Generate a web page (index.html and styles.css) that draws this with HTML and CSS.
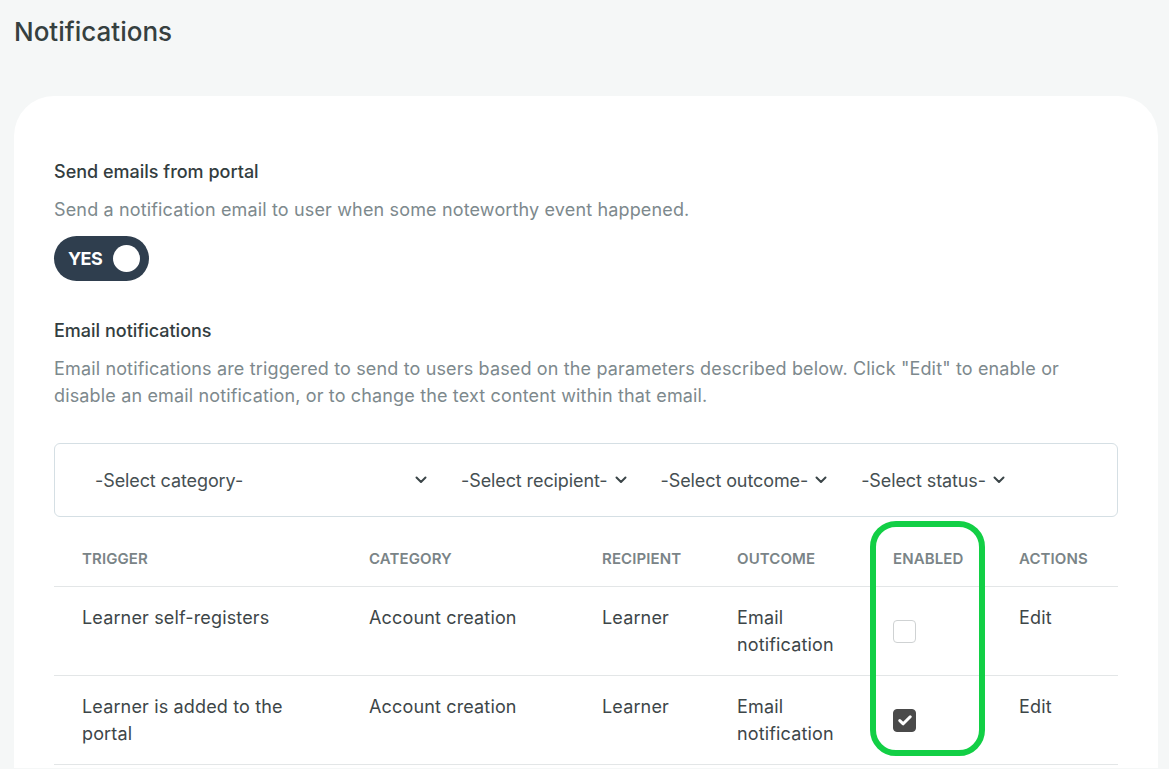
FILE: index.html
```html
<!DOCTYPE html>
<html lang="en">
<head>
  <meta charset="UTF-8">
  <title>Notifications</title>
  <link rel="stylesheet" href="styles.css">
</head>
<body>
  <h1 class="page-title">Notifications</h1>

  <div class="card">
    <!-- portal emails -->
    <h2 class="section-title">Send emails from portal</h2>
    <p class="section-desc">Send a notification email to user when some noteworthy event happened.</p>
    <div class="toggle">
      <span class="toggle-label">YES</span>
      <span class="toggle-knob"></span>
    </div>

    <!-- email notifications -->
    <h2 class="section-title second">Email notifications</h2>
    <p class="section-desc">Email notifications are triggered to send to users based on the parameters described below. Click "Edit" to enable or disable an email notification, or to change the text content within that email.</p>

    <div class="filters">
      <div class="filter filter-category">
        <span>-Select category-</span>
        <svg class="chevron" width="12" height="8" viewBox="0 0 12 8"><path d="M1.5 1.5 6 6l4.5-4.5" fill="none" stroke="#3b4548" stroke-width="2" stroke-linecap="round" stroke-linejoin="round"/></svg>
      </div>
      <div class="filter">
        <span>-Select recipient-</span>
        <svg class="chevron" width="12" height="8" viewBox="0 0 12 8"><path d="M1.5 1.5 6 6l4.5-4.5" fill="none" stroke="#3b4548" stroke-width="2" stroke-linecap="round" stroke-linejoin="round"/></svg>
      </div>
      <div class="filter">
        <span>-Select outcome-</span>
        <svg class="chevron" width="12" height="8" viewBox="0 0 12 8"><path d="M1.5 1.5 6 6l4.5-4.5" fill="none" stroke="#3b4548" stroke-width="2" stroke-linecap="round" stroke-linejoin="round"/></svg>
      </div>
      <div class="filter">
        <span>-Select status-</span>
        <svg class="chevron" width="12" height="8" viewBox="0 0 12 8"><path d="M1.5 1.5 6 6l4.5-4.5" fill="none" stroke="#3b4548" stroke-width="2" stroke-linecap="round" stroke-linejoin="round"/></svg>
      </div>
    </div>

    <div class="table-wrap">
      <table class="notif-table">
        <thead>
          <tr>
            <th class="col-trigger">Trigger</th>
            <th class="col-category">Category</th>
            <th class="col-recipient">Recipient</th>
            <th class="col-outcome">Outcome</th>
            <th class="col-enabled">Enabled</th>
            <th class="col-actions">Actions</th>
          </tr>
        </thead>
        <tbody>
          <tr>
            <td>Learner self-registers</td>
            <td>Account creation</td>
            <td>Learner</td>
            <td>Email<br>notification</td>
            <td><span class="checkbox"></span></td>
            <td>Edit</td>
          </tr>
          <tr>
            <td>Learner is added to the<br>portal</td>
            <td>Account creation</td>
            <td>Learner</td>
            <td>Email<br>notification</td>
            <td>
              <span class="checkbox checked">
                <svg width="14" height="11" viewBox="0 0 14 11"><path d="M1.8 5.6 5.2 8.8 12.2 1.8" fill="none" stroke="#fff" stroke-width="3" stroke-linecap="round" stroke-linejoin="round"/></svg>
              </span>
            </td>
            <td>Edit</td>
          </tr>
        </tbody>
      </table>
      <!-- highlight -->
      <div class="highlight"></div>
    </div>
  </div>
</body>
</html>
```

FILE: styles.css
```css
/* base */
body {
  margin: 0;
  padding: 0 0 0 14px;
  height: 769px;
  background-color: #f5f7f7;
  font-family: 'Inter', sans-serif;
  letter-spacing: 0.15px;
  color: #3b4548;
  overflow: hidden;
}

.page-title {
  margin: 0;
  padding-top: 15px;
  font-size: 26px;
  line-height: 34px;
  font-weight: 500;
  letter-spacing: 0;
  color: #36403f;
}

/* card */
.card {
  margin-top: 47px;
  margin-right: 11px;
  background-color: #fff;
  border-radius: 40px 40px 0 0;
  padding: 62px 40px 0 40px;
  height: 610px;
}

.section-title {
  margin: 0;
  font-size: 18px;
  line-height: 27px;
  font-weight: 500;
  letter-spacing: 0;
  color: #333d40;
}

.section-title.second {
  margin-top: 36px;
}

.section-desc {
  margin: 11px 0 0;
  font-size: 18px;
  line-height: 27px;
  color: #7d898d;
}

/* toggle */
.toggle {
  margin-top: 13px;
  width: 95px;
  height: 45px;
  box-sizing: border-box;
  padding: 0 9px 0 14px;
  border-radius: 23px;
  background-color: #2f3e4e;
  display: flex;
  align-items: center;
  justify-content: space-between;
}

.toggle-label {
  color: #fff;
  font-weight: 700;
  font-size: 18px;
  letter-spacing: -0.6px;
}

.toggle-knob {
  width: 27px;
  height: 27px;
  border-radius: 50%;
  background-color: #fff;
}

/* filters */
.filters {
  margin-top: 34px;
  height: 74px;
  box-sizing: border-box;
  border: 1px solid #d5dfe4;
  border-radius: 6px;
  padding-left: 40px;
  display: flex;
  align-items: center;
  gap: 34px;
  font-size: 18px;
  letter-spacing: -0.1px;
  color: #464f52;
}

.filter {
  display: flex;
  align-items: center;
  gap: 7px;
}

.filter-category {
  width: 332px;
  justify-content: space-between;
}

/* table */
.table-wrap {
  position: relative;
}

.notif-table {
  width: 100%;
  border-collapse: collapse;
  table-layout: fixed;
}

.notif-table th {
  text-align: left;
  text-transform: uppercase;
  font-size: 15px;
  font-weight: 600;
  letter-spacing: 0.1px;
  color: #7a8487;
  padding: 32px 0 17px 28px;
  line-height: 20px;
  border-bottom: 1px solid #e3e6e7;
}

.notif-table td {
  vertical-align: top;
  font-size: 18px;
  line-height: 27px;
  color: #3d4648;
  padding: 17px 0 17px 28px;
  border-bottom: 1px solid #e3e6e7;
}

.col-trigger { width: 259px; }
.col-category { width: 205px; }
.col-recipient { width: 107px; }
.col-outcome { width: 128px; }
.col-enabled { width: 98px; }

.checkbox {
  display: flex;
  align-items: center;
  justify-content: center;
  margin-top: 16px;
  width: 23px;
  height: 23px;
  box-sizing: border-box;
  border: 1px solid #cfd2d3;
  border-radius: 4px;
}

.checkbox.checked {
  background-color: #4a4a4a;
  border-color: #4a4a4a;
}

.highlight {
  position: absolute;
  left: 816px;
  top: 4px;
  width: 115px;
  height: 235px;
  box-sizing: border-box;
  border: 6px solid #12cf45;
  border-radius: 26px;
}
```
